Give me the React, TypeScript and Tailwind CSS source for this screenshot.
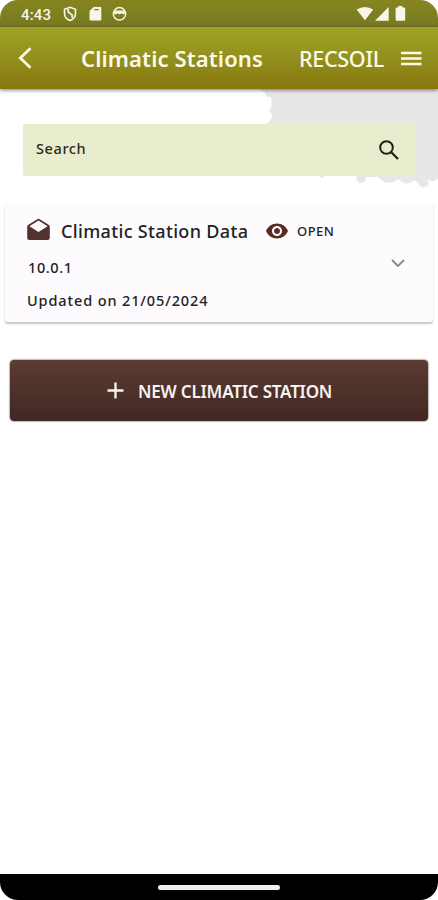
import React from "react";

function StatusBar() {
  return (
    <div className="flex h-[27px] items-center bg-gradient-to-b from-[#85851f] to-[#777a22] pl-[21px] pr-[30px] text-[#f8f6e8]">
      <span className="mt-[3px] w-[42px] whitespace-nowrap font-[Roboto,sans-serif] text-[15px] font-medium leading-[27px] tracking-[0.15px]">4:43</span>
      <svg className="mt-px h-[16px] w-[14px]" viewBox="0 0 14 16" fill="none" stroke="currentColor" strokeWidth="1.6">
        <path d="M7 1.3 12.5 3.2V7.5C12.5 11 10 13.4 7 14.6C4 13.4 1.5 11 1.5 7.5V3.2Z" />
        <path d="M5.2 3V5.8L9.2 9.2V11.8" strokeWidth="1.7" />
      </svg>
      <svg className="ml-[12px] mt-px h-[16px] w-[13px]" viewBox="0 0 13 16" fill="currentColor">
        <path fillRule="evenodd" d="M4.6 1H11.2Q12.3 1 12.3 2.1V13.4Q12.3 14.5 11.2 14.5H1.6Q.5 14.5 .5 13.4V5.1ZM5.2 2.9V4.2H9.8V2.9Z" />
      </svg>
      <svg className="ml-[10px] mt-px h-[16px] w-[15px]" viewBox="0 0 15 16" fill="none" stroke="currentColor" strokeWidth="1.5">
        <circle cx="7.5" cy="7.8" r="6.2" />
        <path d="M2.1 4.4H12.9V7.4L11.2 8.5 9.5 7.2 7.5 8.4 5.5 7.2 3.8 8.5 2.1 7.4Z" fill="currentColor" stroke="none" />
      </svg>
      <svg className="ml-auto mt-px h-[16px] w-[52px]" viewBox="0 0 52 16" fill="currentColor">
        <path d="M.7 3.6Q9 -1.8 17.2 3.6L9 14.3Z" />
        <path d="M32.7 1V14.8H19Z" />
        <path d="M42.2 0H46.4V1.6H48Q49.2 1.6 49.2 2.8V13.6Q49.2 14.8 48 14.8H40.8Q39.6 14.8 39.6 13.6V2.8Q39.6 1.6 40.8 1.6H42.2Z" />
      </svg>
    </div>
  );
}

function Header() {
  return (
    <header className="relative z-10 flex h-[62px] items-center bg-gradient-to-b from-[#9fa225] via-[#93901e] to-[#86760d] pl-[18px] pr-[16px] text-[#fcf9e9] shadow-[0_1px_4px_rgba(30,25,30,0.6)]">
      <svg className="h-[24px] w-[14px]" viewBox="0 0 14 24" fill="none" stroke="currentColor" strokeWidth="2.8">
        <path d="M12.5 2.2 2.3 12 12.5 21.8" />
      </svg>
      <h1 className="ml-[49px] w-[218px] whitespace-nowrap text-[22px] font-semibold leading-[30px] tracking-[0.12px]">Climatic Stations</h1>
      <span className="mt-px w-[102px] whitespace-nowrap text-[21.5px] font-medium leading-[30px] tracking-[-0.3px]">RECSOIL</span>
      <svg className="mt-[2px] h-[16px] w-[21px]" viewBox="0 0 21 16" stroke="currentColor" strokeWidth="2.4">
        <path d="M0 2H20.5M0 7.5H20.5M0 13H20.5" />
      </svg>
    </header>
  );
}

function Search() {
  return (
    <section className="relative h-[114px] px-[23px] pt-[34.5px]">
      <svg className="absolute left-0 top-0 h-[105px] w-[438px]" viewBox="0 0 438 105" fill="#e8e6e6">
        <path d="M260 0H438V90Q434 91 434 93Q430 92 428 90Q430 98 426 97Q422 101 418 94Q414 89 412 93Q405 97 400 91Q397 89 394 93Q385 96 378 88H366Q366 94 361 94Q355 93 357 87H320L265 60V36Q273 31 272 25L269 22Q273 16 271 8Q267 9 266 6Q265 3 260 1Z" />
        <circle cx="322" cy="87" r="2" />
      </svg>
      <div className="relative flex h-[52.5px] w-[393px] items-center rounded-[2px] bg-[#e9edcd] pl-[13px] pr-[16px] text-[#282a20]">
        <span className="-mt-[3px] text-[14.5px] font-medium leading-5 tracking-[0.6px]">Search</span>
        <svg className="ml-auto h-[22px] w-[22px]" viewBox="0 0 22 22" fill="none" stroke="#202218" strokeWidth="2">
          <circle cx="8.5" cy="8.5" r="6.3" />
          <path d="M13 13 20 20" strokeWidth="2.3" />
        </svg>
      </div>
    </section>
  );
}

function StationCard() {
  return (
    <article className="mx-[5px] flex h-[119px] rounded-[3px] bg-[#fdfbfe] pl-[22px] pr-[28px] text-[#242225] shadow-[0_2px_2px_rgba(0,0,0,0.23)]">
      <div className="flex flex-col">
        <div className="flex h-[56px] items-center">
          <svg className="-mt-[3px] h-[23px] w-[24px]" viewBox="0 0 24 23" fill="#51322c">
            <path fillRule="evenodd" d="M11.5.5 22 7Q22.8 7.6 22.8 9V19.8Q22.8 22 20.6 22H2.4Q.2 22 .2 19.8V9Q.2 7.6 1 7ZM11.5 2.5 2.4 8.3 11.5 14 20.6 8.3Z" />
          </svg>
          <h2 className="ml-[10px] w-[205px] whitespace-nowrap text-[18px] font-medium leading-6 tracking-[0.34px]">Climatic Station Data</h2>
          <svg className="h-[22px] w-[22px]" viewBox="1 1 22 22" fill="#572c25">
            <path d="M12 4.5C7 4.5 2.73 7.61 1 12c1.73 4.39 6 7.5 11 7.5s9.27-3.11 11-7.5c-1.73-4.39-6-7.5-11-7.5zM12 17c-2.76 0-5-2.24-5-5s2.24-5 5-5 5 2.24 5 5-2.24 5-5 5zm0-8c-1.66 0-3 1.34-3 3s1.34 3 3 3 3-1.34 3-3-1.34-3-3-3z" />
          </svg>
          <span className="ml-[9px] text-[13px] font-medium leading-5 tracking-[0.45px]">OPEN</span>
        </div>
        <p className="ml-px mt-[-2px] text-[14.5px] font-medium leading-5 tracking-[0.6px]">10.0.1</p>
        <p className="mt-[13px] text-[14.5px] font-medium leading-5 tracking-[0.88px]">Updated on 21/05/2024</p>
      </div>
      <svg className="ml-auto mt-[56px] h-[8px] w-[14px] shrink-0" viewBox="0 0 14 8" fill="none" stroke="#89858b" strokeWidth="1.8">
        <path d="M1 1 7 7 13 1" />
      </svg>
    </article>
  );
}

export default function App() {
  return (
    <main className="flex h-[900px] w-[438px] flex-col overflow-hidden rounded-[18px] bg-white font-['Noto_Sans',sans-serif]">
      <StatusBar />
      <Header />
      <Search />
      <StationCard />
      <button className="mx-[10px] mt-[38px] flex h-[61px] shrink-0 items-center rounded-[4px] bg-gradient-to-b from-[#5c3b33] to-[#402923] pl-[97px] text-[#f8f3f0] shadow-[0_0_1px_1px_rgba(80,55,48,0.35)]">
        <svg className="h-[17px] w-[17px]" viewBox="0 0 17 17" stroke="currentColor" strokeWidth="2.3">
          <path d="M8.5 0.5V16.5M0.5 8.5H16.5" />
        </svg>
        <span className="ml-[14px] mt-[2px] whitespace-nowrap text-[17px] font-semibold leading-6 tracking-[-0.2px]">NEW CLIMATIC STATION</span>
      </button>
      <footer className="mt-auto flex h-[26px] justify-center bg-black pt-[10.5px]">
        <div className="h-[5px] w-[122px] rounded-full bg-[#f0eeee]" />
      </footer>
    </main>
  );
}
